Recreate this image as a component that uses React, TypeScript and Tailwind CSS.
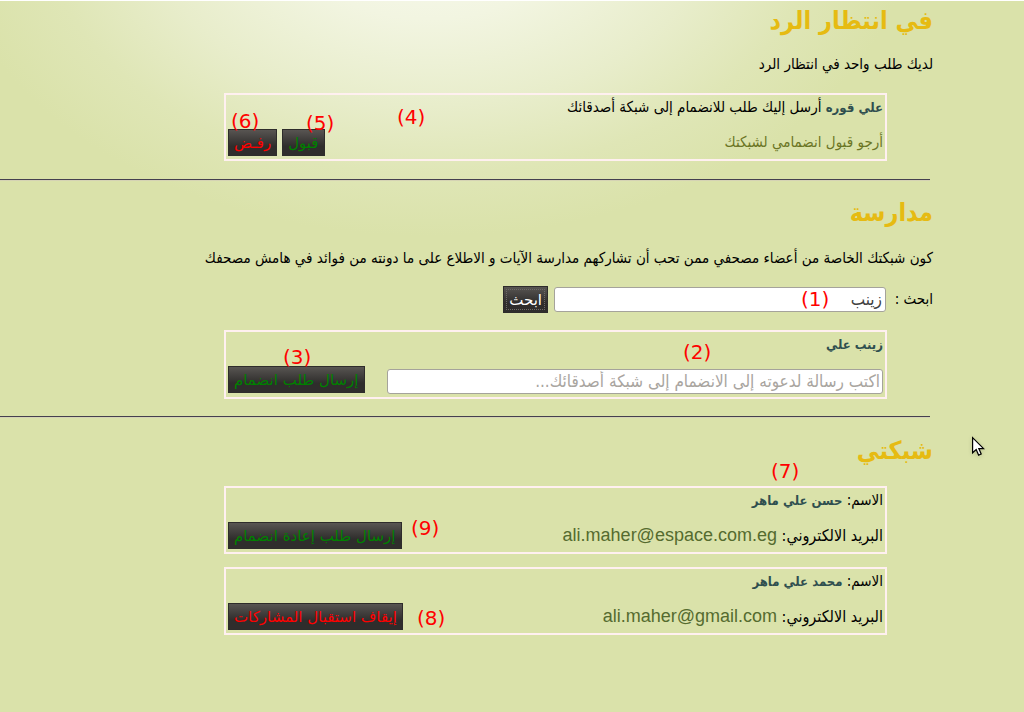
import type { ReactNode } from "react";

const latin = "font-['Liberation_Sans','DejaVu_Sans',sans-serif]";
const wide = "font-['DejaVu_Sans',sans-serif]";
const buttonBase =
  "h-[27px] whitespace-nowrap border border-[#2e2c2b] bg-linear-to-b from-[#585552] to-[#2f2d2c] to-65% px-[5px] font-['DejaVu_Sans',sans-serif] text-[15px] leading-6";

function Note({ n, place }: { n: number; place: string }) {
  return (
    <span dir="ltr" className={`pointer-events-none absolute text-xl leading-6 text-[#f00] ${wide} ${place}`}>
      ({n})
    </span>
  );
}

function Title({ children }: { children: ReactNode }) {
  return <h2 className="text-[25px] leading-10 font-bold text-[#e6bb12]">{children}</h2>;
}

function Name({ children }: { children: ReactNode }) {
  return <b className="text-[13px] text-[#2f4f4f]">{children}</b>;
}

function Card({ children }: { children: ReactNode }) {
  return (
    <div className="relative mr-[46px] ml-56 flex flex-col gap-2.5 border-2 border-[#fff0f0] pr-0.5 pb-[3px] pl-0.5">
      {children}
    </div>
  );
}

function Divider() {
  return <hr className="mr-[3px] border-t border-b border-t-[#45404f] border-b-[#d5d3b4]" />;
}

function Friend({ name, email, children }: { name: string; email: string; children: ReactNode }) {
  return (
    <Card>
      <p className="h-6 leading-6">
        الاسم: <Name>{name}</Name>
      </p>
      <div className="flex h-[27px] items-center justify-between">
        <p className="text-base">
          البريد الالكتروني:{" "}
          <a href={`mailto:${email}`} dir="ltr" className={`${latin} text-lg leading-6 text-[#556b2f]`}>
            {email}
          </a>
        </p>
        {children}
      </div>
    </Card>
  );
}

export default function App() {
  return (
    <main
      dir="rtl"
      lang="ar"
      className="relative min-h-screen border-t border-white bg-[#dae2aa] bg-[radial-gradient(ellipse_480px_310px_at_430px_-75px,#f6f8ea_12%,#f2f5e1_30%,#e8edcb_58%,#dfe6b6_80%,#dae2aa_100%)] bg-no-repeat pr-[91px] font-['DejaVu_Sans_Condensed','DejaVu_Sans',sans-serif] text-[15px] text-black"
    >
      <section className="pb-[18px]">
        <Title>في انتظار الرد</Title>
        <p className="mt-[11px] mb-[17px] leading-6">لديك طلب واحد في انتظار الرد</p>
        <Card>
          <p className="h-6 leading-6">
            <Name>علي قوره</Name> أرسل إليك طلب للانضمام إلى شبكة أصدقائك
          </p>
          <div className="flex h-[27px] items-center">
            <p className="grow text-[#6b7525]">أرجو قبول انضمامي لشبكتك</p>
            <div className="flex gap-[5px]">
              <button type="button" className={`${buttonBase} text-[#008000]`}>قبول</button>
              <button type="button" className={`${buttonBase} text-[#f00]`}>رفـض</button>
            </div>
          </div>
          <Note n={4} place="left-[171px] top-2.5" />
          <Note n={5} place="left-20 top-4" />
          <Note n={6} place="left-[5px] top-3.5" />
        </Card>
      </section>
      <Divider />
      <section className="pt-3 pb-[17px]">
        <Title>مدارسة</Title>
        <p className="mt-[13px] leading-6">
          كون شبكتك الخاصة من أعضاء مصحفي ممن تحب أن تشاركهم مدارسة الآيات و الاطلاع على ما دونته من فوائد في هامش مصحفك
        </p>
        <form className="mt-4 mb-[17px] flex items-center gap-1.5" onSubmit={(e) => e.preventDefault()}>
          <label htmlFor="member" className="w-[41px] whitespace-nowrap">ابحث :</label>
          <div className="relative">
            <input
              id="member"
              type="text"
              defaultValue="زينب"
              className="block h-[25px] w-[332px] rounded-[3px] border border-[#a5a39b] bg-white px-[3px] text-[17px] text-[#404040]"
            />
            <Note n={1} place="left-[247px] top-0" />
          </div>
          <button type="submit" className={`${buttonBase} text-white outline-1 -outline-offset-4 outline-dotted outline-[#6d6a66]`}>
            ابحث
          </button>
        </form>
        <Card>
          <p className="h-6 leading-6"><Name>زينب علي</Name></p>
          <div className="flex h-7 gap-[22px]">
            <input
              type="text"
              aria-label="رسالة الدعوة"
              placeholder="اكتب رسالة لدعوته إلى الانضمام إلى شبكة أصدقائك..."
              className="h-[25px] min-w-0 grow self-end rounded-[3px] border border-[#a5a39b] bg-white px-0.5 text-[17px] placeholder:text-[#a9a59f]"
            />
            <button type="button" className={`${buttonBase} text-[#008000]`}>إرسال طلب انضمام</button>
          </div>
          <Note n={2} place="left-[457px] top-2" />
          <Note n={3} place="left-[57px] top-[13px]" />
        </Card>
      </section>
      <Divider />
      <section className="flex flex-col pt-[13px]">
        <Title>شبكتي</Title>
        <div className="mt-[15px] flex flex-col gap-[13px]">
          <Friend name="حسن علي ماهر" email="ali.maher@espace.com.eg">
            <button type="button" className={`${buttonBase} text-[#008000]`}>إرسال طلب إعادة انضمام</button>
            <Note n={7} place="left-[545px] -top-[29px]" />
            <Note n={9} place="left-[185px] top-7" />
          </Friend>
          <Friend name="محمد علي ماهر" email="ali.maher@gmail.com">
            <button type="button" className={`${buttonBase} text-[#f00]`}>إيقاف استقبال المشاركات</button>
            <Note n={8} place="left-[191px] top-[37px]" />
          </Friend>
        </div>
      </section>
      <svg className="absolute top-[435px] left-[971px] drop-shadow-sm" width="14" height="21" viewBox="0 0 14 21" aria-hidden="true">
        <path d="M1.6 1.6v15.2l3.6-3.3 2.4 5.6 2.6-1.1-2.4-5.4h4.8z" fill="#fff" stroke="#000" strokeWidth="1.2" />
      </svg>
    </main>
  );
}
